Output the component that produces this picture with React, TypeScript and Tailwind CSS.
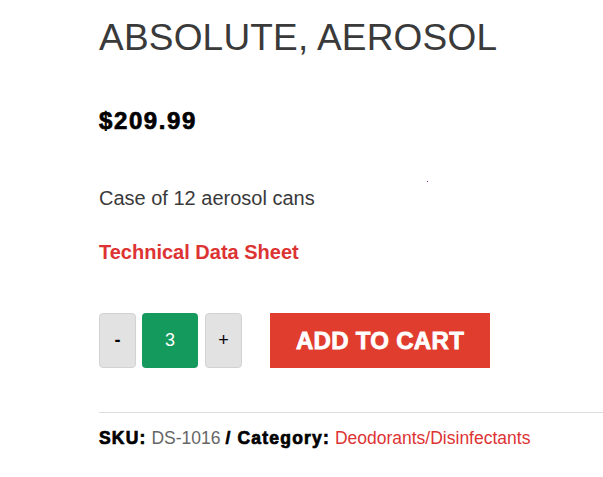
import React from 'react'

export default function App() {
  return (
    <div className="min-h-screen w-[603px] bg-white pl-[99px] pt-[19px] font-['Liberation_Sans',Arial,sans-serif]">
      <h1 className="text-[37px] leading-[37px] font-normal tracking-[0.2px] text-[#3a3a3a]">ABSOLUTE, AEROSOL</h1>

      <div className="mt-[53px] text-[24px] leading-[24px] font-bold tracking-[1.6px] text-black [-webkit-text-stroke:0.7px_black]">
        $209.99
      </div>

      <div className="relative">
        <p className="mt-[55px] text-[20px] leading-[20px] text-[#3a3a3a]">Case of 12 aerosol cans</p>
        <span className="absolute left-[328px] top-[-7px] h-[1px] w-[1px] bg-[#8a2a8a]" />
      </div>

      <a className="mt-[34px] block text-[20px] leading-[20px] font-bold text-[#dd3333]">Technical Data Sheet</a>

      <div className="mt-[51px] flex items-center">
        <button className="flex h-[55px] w-[37px] items-center justify-center rounded-[4px] border border-[#d2d2d2] bg-[#e2e2e2] text-[18px] font-bold text-black">
          -
        </button>
        <div className="ml-[6px] flex h-[55px] w-[56px] items-center justify-center rounded-[4px] bg-[#149a5c] text-[18px] text-white">
          3
        </div>
        <button className="ml-[7px] flex h-[55px] w-[37px] items-center justify-center rounded-[4px] border border-[#d2d2d2] bg-[#e2e2e2] text-[18px] text-black">
          +
        </button>
        <button className="ml-[28px] flex h-[55px] w-[220px] items-center justify-center bg-[#e13d2e] text-[24px] font-bold tracking-[0.3px] text-white [-webkit-text-stroke:0.8px_white]">
          ADD TO CART
        </button>
      </div>

      <div className="mt-[44px] h-px w-full bg-[#dddddd]" />

      <div className="mt-[17px] text-[17.5px] leading-[17px] text-black">
        <span className="font-bold tracking-[1.2px] [-webkit-text-stroke:0.7px_black]">SKU:</span>{' '}
        <span className="text-[#666666]">DS-1016</span>{' '}
        <span className="font-bold tracking-[1.2px] [-webkit-text-stroke:0.7px_black]">/ Category:</span>{' '}
        <a className="text-[#dd3333]">Deodorants/Disinfectants</a>
      </div>
    </div>
  )
}
